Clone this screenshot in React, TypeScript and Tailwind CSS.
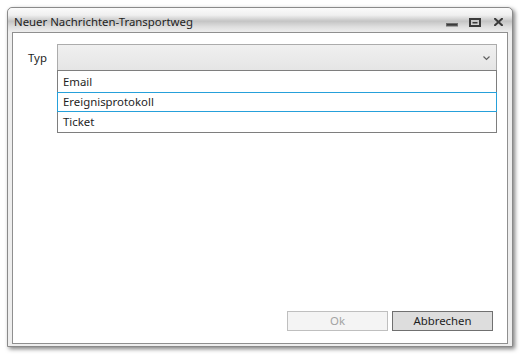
import React from "react";

const font = { fontFamily: '"Noto Sans", "Open Sans", Arial, sans-serif' };

const TitleIcons: React.FC = () => (
  <div className="flex items-end absolute right-[9px] top-[9px]">
    {/* minimieren */}
    <svg width="12" height="10" viewBox="0 0 12 10" className="mr-[11px]">
      <rect x="0.5" y="6.5" width="11" height="2.5" fill="#3a3a3a" stroke="#6b6b6b" strokeWidth="1" />
    </svg>
    {/* maximieren */}
    <svg width="12" height="9" viewBox="0 0 12 9" className="mr-[13px]">
      <rect x="1" y="1" width="10" height="7" fill="none" stroke="#3a3a3a" strokeWidth="2" />
      <rect x="3.5" y="4" width="5" height="1.5" fill="#3a3a3a" />
    </svg>
    {/* schließen */}
    <svg width="9" height="8" viewBox="0 0 9 8" className="mb-[1px]">
      <path d="M1 0.8 L8 7.2 M8 0.8 L1 7.2" stroke="#3a3a3a" strokeWidth="2" strokeLinecap="square" />
    </svg>
  </div>
);

const items = ["Email", "Ereignisprotokoll", "Ticket"];

export default function App() {
  return (
    <div className="w-[525px] h-[360px] bg-white pl-[7px] pt-[7px]" style={font}>
      <div className="relative w-[506px] h-[340px] flex flex-col rounded-t-[5px] border border-[#8a8a8a] bg-[#eeeeee] shadow-[2px_2px_4px_rgba(0,0,0,0.5)]">
        <div className="h-[24px] flex items-center pl-[6px] rounded-t-[5px] bg-[linear-gradient(to_bottom,#fbfbfb_0%,#efefef_30%,#c4c4c4_55%,#dedede_78%,#eeeeee_100%)]">
          <span className="text-[11.4px] text-[#1e1e1e] leading-none mt-[4px]">Neuer Nachrichten-Transportweg</span>
        </div>
        <TitleIcons />
        <div className="flex-1 mx-[4px] mb-[2px] border border-[#8f8f8f] bg-white flex flex-col relative">
          <div className="flex items-center pt-[11px] pl-[15px] pr-[10px]">
            <span className="text-[11.4px] text-[#1e1e1e] w-[29px]">Typ</span>
            <div className="relative flex-1 h-[27px] border border-[#acacac] bg-[linear-gradient(to_bottom,#f0f0f0,#e5e5e5)]">
              <svg width="7" height="5" viewBox="0 0 7 5" className="absolute right-[6px] top-[11px]">
                <path d="M0.5 0.5 L3.5 3.5 L6.5 0.5" fill="none" stroke="#606060" strokeWidth="1.2" />
              </svg>
              {/* Ausklappliste */}
              <div className="absolute left-[-1px] right-[-1px] top-[25px] border border-[#7e7e7e] bg-white pt-[1px] z-10">
                {items.map((it) => (
                  <div
                    key={it}
                    className={
                      "h-[20px] flex items-center pl-[4px] text-[11.4px] text-[#1e1e1e] border " +
                      (it === "Ereignisprotokoll" ? "border-[#26a0da] -mx-[1px] pl-[5px]" : "border-transparent")
                    }
                  >
                    {it}
                  </div>
                ))}
              </div>
            </div>
          </div>
          <div className="flex-1" />
          <div className="flex justify-end gap-[4px] pr-[14px] pb-[12px]">
            <button className="w-[101px] h-[20px] border border-[#bfbfbf] bg-[#f4f4f4] text-[11.4px] text-[#a3a3a3] leading-none">
              Ok
            </button>
            <button className="w-[101px] h-[20px] border border-[#707070] bg-[#dddddd] text-[11.4px] text-[#1e1e1e] leading-none">
              Abbrechen
            </button>
          </div>
        </div>
      </div>
    </div>
  );
}
